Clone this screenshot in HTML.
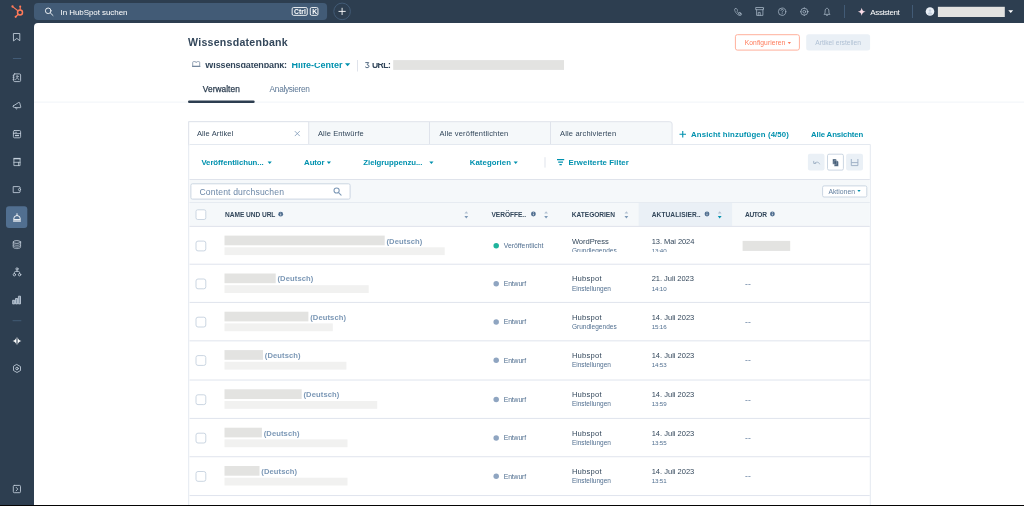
<!DOCTYPE html>
<html lang="de">
<head>
<meta charset="utf-8">
<title>Wissensdatenbank</title>
<style>
*{box-sizing:border-box;margin:0;padding:0}
html,body{width:1024px;height:506px;overflow:hidden;background:#2d3e50}
body{font-family:"Liberation Sans",sans-serif;color:#33475b;position:relative}
.abs{position:absolute}
.t{position:absolute;white-space:pre;line-height:1}
#clip1{left:188px;top:62.6px;width:400px;height:12px;overflow:hidden}
#clip2{left:560px;top:226px;width:150px;height:26px;overflow:hidden}
#clip2 .t,#clip1 .t{position:absolute}
#txt{position:absolute;left:0;top:0;width:1024px;height:506px;will-change:transform}
#bottomline{left:0;top:505px;width:1024px;height:1px;background:#050505}
svg#ic,svg#bx{position:absolute;left:0;top:0;width:1024px;height:506px}
</style>
</head>
<body>
<svg id="bx" viewBox="0 0 1024 506" width="1024" height="506">
<path d="M34 506V27a4 4 0 0 1 4-4H1024V506z" fill="#fff"/>
<rect x="34.00" y="2.90" width="293.10" height="17.00" rx="4" fill="#425b76"/>
<rect x="292.15" y="7.55" width="15.10" height="7.80" rx="1.35" fill="none" stroke="#ffffff" stroke-width="0.9"/>
<rect x="310.25" y="7.55" width="7.70" height="7.80" rx="1.35" fill="none" stroke="#ffffff" stroke-width="0.9"/>
<circle cx="342.1" cy="11.4" r="8.3" fill="none" stroke="#425b76" stroke-width="1"/>
<rect x="844.00" y="5.00" width="1.00" height="13.00" rx="0" fill="#425b76"/>
<rect x="912.00" y="5.00" width="1.00" height="13.00" rx="0" fill="#425b76"/>
<rect x="937.90" y="6.80" width="66.90" height="10.20" rx="0" fill="#e3e3e1"/>
<rect x="12.90" y="58.00" width="8.30" height="1.00" rx="0" fill="#425b76"/>
<rect x="12.60" y="320.20" width="8.70" height="1.00" rx="0" fill="#425b76"/>
<rect x="6.00" y="206.20" width="21.30" height="21.80" rx="3" fill="#516f90"/>
<rect x="735.40" y="34.70" width="64.00" height="15.40" rx="2.0" fill="#fff" stroke="#ffb09c" stroke-width="1"/>
<rect x="806.20" y="34.20" width="63.90" height="16.40" rx="2.5" fill="#eaf0f6"/>
<rect x="357.00" y="60.00" width="1.00" height="11.50" rx="0" fill="#dfe3eb"/>
<rect x="393.20" y="60.10" width="170.80" height="9.80" rx="0" fill="#e3e3e1"/>
<rect x="34.00" y="101.60" width="990.00" height="1.00" rx="0" fill="#f1f4f8"/>
<rect x="188.00" y="100.60" width="66.70" height="2.50" rx="1.25" fill="#2d3e50"/>
<path d="M188.700 144.500V121.700H669.800a2.300 2.300 0 0 1 2.300 2.300V144.500z" fill="#f5f8fa" stroke="#dfe3eb" stroke-width="1"/>
<path d="M188.700 145.500V121.700H308.700V144.500" fill="#fff" stroke="#dfe3eb" stroke-width="1"/>
<rect x="189.50" y="144.00" width="119.00" height="1.00" rx="0" fill="#e4e9f0"/>
<rect x="429.00" y="122.00" width="1.00" height="22.00" rx="0" fill="#dfe3eb"/>
<rect x="550.00" y="122.00" width="1.00" height="22.00" rx="0" fill="#dfe3eb"/>
<path d="M188.700 144.500V507M308.700 144.500H870.300V507" fill="none" stroke="#e4e9f0" stroke-width="1"/>
<rect x="189.50" y="179.00" width="680.30" height="1.00" rx="0" fill="#dfe3eb"/>
<rect x="189.50" y="180.00" width="680.30" height="22.00" rx="0" fill="#f5f8fa"/>
<rect x="189.50" y="202.00" width="680.30" height="24.30" rx="0" fill="#f5f8fa"/>
<rect x="638.60" y="203.00" width="93.50" height="23.30" rx="0" fill="#eaf0f6"/>
<rect x="189.50" y="202.00" width="680.30" height="1.00" rx="0" fill="#e6ebf1"/>
<rect x="189.50" y="225.90" width="680.30" height="1.00" rx="0" fill="#dfe3eb"/>
<rect x="544.50" y="157.20" width="1.00" height="10.40" rx="0" fill="#dfe3eb"/>
<rect x="807.90" y="153.70" width="16.60" height="16.90" rx="2" fill="#eaf0f6"/>
<rect x="827.50" y="154.20" width="15.90" height="15.90" rx="1.5" fill="#fff" stroke="#cbd6e2" stroke-width="1"/>
<rect x="846.10" y="153.70" width="16.90" height="16.90" rx="2" fill="#eaf0f6"/>
<rect x="190.90" y="183.80" width="159.20" height="15.30" rx="1.5" fill="#fff" stroke="#cbd6e2" stroke-width="1"/>
<rect x="822.60" y="185.90" width="44.20" height="11.10" rx="1.5" fill="#fff" stroke="#cbd6e2" stroke-width="1"/>
<rect x="196.00" y="209.80" width="9.80" height="9.70" rx="1.7000000000000002" fill="#fff" stroke="#cbd6e2" stroke-width="1"/>
<rect x="224.50" y="235.60" width="160.20" height="9.70" rx="0" fill="#e3e3e1"/>
<rect x="224.50" y="247.30" width="220.20" height="7.80" rx="0" fill="#f1f1f0"/>
<rect x="196.00" y="241.10" width="9.80" height="9.80" rx="2.0" fill="#fff" stroke="#cbd6e2" stroke-width="1"/>
<circle cx="496.2" cy="245.80" r="2.750" fill="#1fb39c"/>
<rect x="189.50" y="263.70" width="680.30" height="1.05" rx="0" fill="#e1e5ee"/>
<rect x="224.50" y="273.50" width="51.20" height="9.70" rx="0" fill="#e3e3e1"/>
<rect x="224.50" y="285.20" width="144.20" height="7.80" rx="0" fill="#f1f1f0"/>
<rect x="196.00" y="279.00" width="9.80" height="9.80" rx="2.0" fill="#fff" stroke="#cbd6e2" stroke-width="1"/>
<circle cx="496.2" cy="283.70" r="2.750" fill="#8fa5c1"/>
<rect x="189.50" y="301.90" width="680.30" height="1.05" rx="0" fill="#e1e5ee"/>
<rect x="224.50" y="311.70" width="83.90" height="9.70" rx="0" fill="#e3e3e1"/>
<rect x="224.50" y="323.40" width="108.30" height="7.80" rx="0" fill="#f1f1f0"/>
<rect x="196.00" y="317.20" width="9.80" height="9.80" rx="2.0" fill="#fff" stroke="#cbd6e2" stroke-width="1"/>
<circle cx="496.2" cy="321.90" r="2.750" fill="#8fa5c1"/>
<rect x="189.50" y="340.30" width="680.30" height="1.05" rx="0" fill="#e1e5ee"/>
<rect x="224.50" y="350.10" width="38.50" height="9.70" rx="0" fill="#e3e3e1"/>
<rect x="224.50" y="361.80" width="121.90" height="7.80" rx="0" fill="#f1f1f0"/>
<rect x="196.00" y="355.60" width="9.80" height="9.80" rx="2.0" fill="#fff" stroke="#cbd6e2" stroke-width="1"/>
<circle cx="496.2" cy="360.30" r="2.750" fill="#8fa5c1"/>
<rect x="189.50" y="379.50" width="680.30" height="1.05" rx="0" fill="#e1e5ee"/>
<rect x="224.50" y="389.30" width="77.20" height="9.70" rx="0" fill="#e3e3e1"/>
<rect x="224.50" y="401.00" width="152.70" height="7.80" rx="0" fill="#f1f1f0"/>
<rect x="196.00" y="394.80" width="9.80" height="9.80" rx="2.0" fill="#fff" stroke="#cbd6e2" stroke-width="1"/>
<circle cx="496.2" cy="399.50" r="2.750" fill="#8fa5c1"/>
<rect x="189.50" y="417.90" width="680.30" height="1.05" rx="0" fill="#e1e5ee"/>
<rect x="224.50" y="427.70" width="37.40" height="9.70" rx="0" fill="#e3e3e1"/>
<rect x="224.50" y="439.40" width="123.00" height="7.80" rx="0" fill="#f1f1f0"/>
<rect x="196.00" y="433.20" width="9.80" height="9.80" rx="2.0" fill="#fff" stroke="#cbd6e2" stroke-width="1"/>
<circle cx="496.2" cy="437.90" r="2.750" fill="#8fa5c1"/>
<rect x="189.50" y="456.20" width="680.30" height="1.05" rx="0" fill="#e1e5ee"/>
<rect x="224.50" y="466.00" width="35.00" height="9.70" rx="0" fill="#e3e3e1"/>
<rect x="224.50" y="477.70" width="123.00" height="7.80" rx="0" fill="#f1f1f0"/>
<rect x="196.00" y="471.50" width="9.80" height="9.80" rx="2.0" fill="#fff" stroke="#cbd6e2" stroke-width="1"/>
<circle cx="496.2" cy="476.20" r="2.750" fill="#8fa5c1"/>
<rect x="189.50" y="495.00" width="680.30" height="1.05" rx="0" fill="#e1e5ee"/>
<rect x="742.60" y="240.90" width="47.60" height="10.00" rx="0" fill="#e3e3e1"/>
</svg>
<div id="txt">
<div class="t" style="left:60.50px;top:9.00px;font-size:8px;color:#ffffff;letter-spacing:-0.065px;">In HubSpot suchen</div>
<div class="t" style="left:870.30px;top:9.00px;font-size:8px;color:#ffffff;letter-spacing:-0.371px;">Assistent</div>
<div class="t" style="left:294.10px;top:9.00px;font-size:6.8px;color:#ffffff;letter-spacing:-0.006px;font-weight:bold;">Ctrl</div>
<div class="t" style="left:312.20px;top:9.00px;font-size:6.8px;color:#ffffff;letter-spacing:-0.722px;font-weight:bold;">K</div>
<div class="t" style="left:188.10px;top:37.00px;font-size:10.6px;color:#33475b;letter-spacing:0.248px;font-weight:bold;">Wissensdatenbank</div>
<div class="t" style="left:744.80px;top:40.00px;font-size:6.7px;color:#ff7a59;letter-spacing:0.060px;">Konfigurieren</div>
<div class="t" style="left:815.20px;top:40.00px;font-size:6.7px;color:#b0c1d4;letter-spacing:0.005px;">Artikel erstellen</div>
<div class="t" style="left:202.80px;top:85.00px;font-size:8.3px;color:#2d3e50;letter-spacing:0.070px;-webkit-text-stroke:0.25px #2d3e50;">Verwalten</div>
<div class="t" style="left:269.60px;top:85.00px;font-size:8.3px;color:#5c7795;letter-spacing:-0.296px;">Analysieren</div>
<div class="t" style="left:196.90px;top:130.00px;font-size:7.5px;color:#33475b;letter-spacing:0.126px;">Alle Artikel</div>
<div class="t" style="left:318.00px;top:130.00px;font-size:7.5px;color:#33475b;letter-spacing:0.118px;">Alle Entwürfe</div>
<div class="t" style="left:439.40px;top:130.00px;font-size:7.5px;color:#33475b;letter-spacing:0.174px;">Alle veröffentlichten</div>
<div class="t" style="left:560.00px;top:130.00px;font-size:7.5px;color:#33475b;letter-spacing:0.171px;">Alle archivierten</div>
<div class="t" style="left:691.10px;top:131.00px;font-size:7.8px;color:#0091ae;letter-spacing:0.122px;font-weight:bold;">Ansicht hinzufügen (4/50)</div>
<div class="t" style="left:811.10px;top:131.00px;font-size:7.8px;color:#0091ae;letter-spacing:-0.129px;font-weight:bold;">Alle Ansichten</div>
<div class="t" style="left:201.40px;top:159.00px;font-size:7.8px;color:#0091ae;letter-spacing:-0.056px;font-weight:bold;">Veröffentlichun...</div>
<div class="t" style="left:304.10px;top:159.00px;font-size:7.8px;color:#0091ae;letter-spacing:-0.074px;font-weight:bold;">Autor</div>
<div class="t" style="left:363.30px;top:159.00px;font-size:7.8px;color:#0091ae;letter-spacing:-0.045px;font-weight:bold;">Zielgruppenzu...</div>
<div class="t" style="left:469.80px;top:159.00px;font-size:7.8px;color:#0091ae;letter-spacing:0.052px;font-weight:bold;">Kategorien</div>
<div class="t" style="left:568.40px;top:159.00px;font-size:7.8px;color:#0091ae;letter-spacing:0.091px;font-weight:bold;">Erweiterte Filter</div>
<div class="t" style="left:199.40px;top:188.00px;font-size:8.6px;color:#6b87a7;letter-spacing:0.161px;">Content durchsuchen</div>
<div class="t" style="left:828.40px;top:189.00px;font-size:6.8px;color:#6480a0;letter-spacing:0.021px;">Aktionen</div>
<div class="t" style="left:225.00px;top:212.00px;font-size:6.6px;color:#33475b;letter-spacing:-0.047px;font-weight:bold;">NAME UND URL</div>
<div class="t" style="left:491.50px;top:212.00px;font-size:6.6px;color:#33475b;letter-spacing:-0.039px;font-weight:bold;">VERÖFFE..</div>
<div class="t" style="left:571.80px;top:212.00px;font-size:6.6px;color:#33475b;letter-spacing:-0.032px;font-weight:bold;">KATEGORIEN</div>
<div class="t" style="left:651.70px;top:212.00px;font-size:6.6px;color:#33475b;letter-spacing:0.083px;font-weight:bold;">AKTUALISIER..</div>
<div class="t" style="left:745.00px;top:212.00px;font-size:6.6px;color:#33475b;letter-spacing:-0.357px;font-weight:bold;">AUTOR</div>
<div class="t" style="left:386.50px;top:238.00px;font-size:7.6px;color:#7c98b6;letter-spacing:0.096px;font-weight:bold;">(Deutsch)</div>
<div class="t" style="left:503.70px;top:243.00px;font-size:6.8px;color:#516f90;letter-spacing:0.041px;">Veröffentlicht</div>
<div class="t" style="left:571.90px;top:238.00px;font-size:7.6px;color:#33475b;letter-spacing:-0.065px;">WordPress</div>
<div class="t" style="left:651.70px;top:238.00px;font-size:7.5px;color:#33475b;letter-spacing:-0.061px;">13. Mai 2024</div>
<div class="t" style="left:277.50px;top:275.00px;font-size:7.6px;color:#7c98b6;letter-spacing:0.096px;font-weight:bold;">(Deutsch)</div>
<div class="t" style="left:503.70px;top:281.00px;font-size:6.8px;color:#516f90;letter-spacing:-0.091px;">Entwurf</div>
<div class="t" style="left:571.90px;top:275.00px;font-size:7.6px;color:#33475b;letter-spacing:0.234px;">Hubspot</div>
<div class="t" style="left:651.70px;top:275.00px;font-size:7.5px;color:#33475b;letter-spacing:-0.029px;">21. Juli 2023</div>
<div class="t" style="left:571.90px;top:286.00px;font-size:6.5px;color:#516f90;letter-spacing:-0.003px;">Einstellungen</div>
<div class="t" style="left:651.70px;top:286.00px;font-size:6.2px;color:#516f90;letter-spacing:-0.146px;">14:10</div>
<div class="t" style="left:745.00px;top:280.00px;font-size:8.6px;color:#6a84a3;letter-spacing:0.066px;">--</div>
<div class="t" style="left:310.20px;top:314.00px;font-size:7.6px;color:#7c98b6;letter-spacing:0.096px;font-weight:bold;">(Deutsch)</div>
<div class="t" style="left:503.70px;top:319.00px;font-size:6.8px;color:#516f90;letter-spacing:-0.091px;">Entwurf</div>
<div class="t" style="left:571.90px;top:314.00px;font-size:7.6px;color:#33475b;letter-spacing:0.234px;">Hubspot</div>
<div class="t" style="left:651.70px;top:314.00px;font-size:7.5px;color:#33475b;letter-spacing:0.004px;">14. Juli 2023</div>
<div class="t" style="left:571.90px;top:324.00px;font-size:6.5px;color:#516f90;letter-spacing:0.029px;">Grundlegendes</div>
<div class="t" style="left:651.70px;top:324.00px;font-size:6.2px;color:#516f90;letter-spacing:-0.146px;">15:16</div>
<div class="t" style="left:745.00px;top:318.00px;font-size:8.6px;color:#6a84a3;letter-spacing:0.066px;">--</div>
<div class="t" style="left:264.80px;top:352.00px;font-size:7.6px;color:#7c98b6;letter-spacing:0.096px;font-weight:bold;">(Deutsch)</div>
<div class="t" style="left:503.70px;top:358.00px;font-size:6.8px;color:#516f90;letter-spacing:-0.091px;">Entwurf</div>
<div class="t" style="left:571.90px;top:352.00px;font-size:7.6px;color:#33475b;letter-spacing:0.234px;">Hubspot</div>
<div class="t" style="left:651.70px;top:352.00px;font-size:7.5px;color:#33475b;letter-spacing:0.004px;">14. Juli 2023</div>
<div class="t" style="left:571.90px;top:362.00px;font-size:6.5px;color:#516f90;letter-spacing:-0.003px;">Einstellungen</div>
<div class="t" style="left:651.70px;top:362.00px;font-size:6.2px;color:#516f90;letter-spacing:-0.146px;">14:53</div>
<div class="t" style="left:745.00px;top:356.00px;font-size:8.6px;color:#6a84a3;letter-spacing:0.066px;">--</div>
<div class="t" style="left:303.50px;top:391.00px;font-size:7.6px;color:#7c98b6;letter-spacing:0.096px;font-weight:bold;">(Deutsch)</div>
<div class="t" style="left:503.70px;top:397.00px;font-size:6.8px;color:#516f90;letter-spacing:-0.091px;">Entwurf</div>
<div class="t" style="left:571.90px;top:391.00px;font-size:7.6px;color:#33475b;letter-spacing:0.234px;">Hubspot</div>
<div class="t" style="left:651.70px;top:391.00px;font-size:7.5px;color:#33475b;letter-spacing:0.004px;">14. Juli 2023</div>
<div class="t" style="left:571.90px;top:401.00px;font-size:6.5px;color:#516f90;letter-spacing:-0.003px;">Einstellungen</div>
<div class="t" style="left:651.70px;top:401.00px;font-size:6.2px;color:#516f90;letter-spacing:-0.146px;">13:59</div>
<div class="t" style="left:745.00px;top:396.00px;font-size:8.6px;color:#6a84a3;letter-spacing:0.066px;">--</div>
<div class="t" style="left:263.70px;top:430.00px;font-size:7.6px;color:#7c98b6;letter-spacing:0.096px;font-weight:bold;">(Deutsch)</div>
<div class="t" style="left:503.70px;top:435.00px;font-size:6.8px;color:#516f90;letter-spacing:-0.091px;">Entwurf</div>
<div class="t" style="left:571.90px;top:430.00px;font-size:7.6px;color:#33475b;letter-spacing:0.234px;">Hubspot</div>
<div class="t" style="left:651.70px;top:430.00px;font-size:7.5px;color:#33475b;letter-spacing:0.004px;">14. Juli 2023</div>
<div class="t" style="left:571.90px;top:440.00px;font-size:6.5px;color:#516f90;letter-spacing:-0.003px;">Einstellungen</div>
<div class="t" style="left:651.70px;top:440.00px;font-size:6.2px;color:#516f90;letter-spacing:-0.146px;">13:55</div>
<div class="t" style="left:745.00px;top:434.00px;font-size:8.6px;color:#6a84a3;letter-spacing:0.066px;">--</div>
<div class="t" style="left:261.30px;top:468.00px;font-size:7.6px;color:#7c98b6;letter-spacing:0.096px;font-weight:bold;">(Deutsch)</div>
<div class="t" style="left:503.70px;top:474.00px;font-size:6.8px;color:#516f90;letter-spacing:-0.091px;">Entwurf</div>
<div class="t" style="left:571.90px;top:468.00px;font-size:7.6px;color:#33475b;letter-spacing:0.234px;">Hubspot</div>
<div class="t" style="left:651.70px;top:468.00px;font-size:7.5px;color:#33475b;letter-spacing:0.004px;">14. Juli 2023</div>
<div class="t" style="left:571.90px;top:478.00px;font-size:6.5px;color:#516f90;letter-spacing:-0.003px;">Einstellungen</div>
<div class="t" style="left:651.70px;top:478.00px;font-size:6.2px;color:#516f90;letter-spacing:-0.146px;">13:51</div>
<div class="t" style="left:745.00px;top:472.00px;font-size:8.6px;color:#6a84a3;letter-spacing:0.066px;">--</div>
<div id="clip2" class="abs"><div class="t" style="left:11.90px;top:22.00px;font-size:6.5px;color:#516f90;letter-spacing:0.029px;">Grundlegendes</div><div class="t" style="left:91.70px;top:22.00px;font-size:6.2px;color:#516f90;letter-spacing:-0.146px;">13:40</div></div>
<div id="clip1" class="abs"><div class="t" style="left:17.10px;top:-1.60px;font-size:9px;color:#33475b;letter-spacing:-0.153px;font-weight:bold;">Wissensdatenbank:</div><div class="t" style="left:103.60px;top:-1.60px;font-size:9px;color:#0091ae;letter-spacing:-0.001px;font-weight:bold;">Hilfe-Center</div><div class="t" style="left:183.90px;top:-1.60px;font-size:8.6px;color:#33475b;letter-spacing:-0.510px;font-weight:bold;">URL:</div></div>
</div>
<svg id="ic" viewBox="0 0 1024 506" width="1024" height="506" fill="none" stroke-linecap="round" stroke-linejoin="round">
<!-- hubspot sprocket -->
<g stroke="#ff7a59" fill="none">
<circle cx="20" cy="12.5" r="2.5" stroke-width="1.5"/>
<path d="M20.2 9.4V7.2M17.9 10.8L12.9 6.9M18 14.5L16 16.5" stroke-width="1.1"/>
<g fill="#ff7a59" stroke="none"><circle cx="20.2" cy="6.6" r="1.05"/><circle cx="12.5" cy="6.5" r="1.15"/><circle cx="15.7" cy="16.8" r="1.1"/></g>
</g>
<!-- topbar search -->
<g stroke="#eef2f6" stroke-width="0.95"><circle cx="48.2" cy="10.8" r="2.8"/><path d="M50.4 13L53 15.5"/></g>
<!-- plus -->
<path d="M338.9 11.4h6.4M342.1 8.2v6.4" stroke="#fff" stroke-width="0.9"/>
<!-- right topbar icons -->
<g stroke="#a6b5c5" stroke-width="0.78">
<!-- phone -->
<g transform="translate(738.2 11.9) scale(0.88) translate(-738.6 -12.2)"><path d="M735 8.7c.6-.7 1.5-.7 2 0l.7 1.2c.3.6.1 1.1-.5 1.4.5 1.5 1.2 2.2 2.3 2.6.4-.7 1-.8 1.5-.4l1 .8c.6.6.5 1.300-.2 1.700-1.300.700-2.800.1-4.300-1.200-1.500-1.400-2.600-3-2.900-4.600-.1-.6 0-1.100.4-1.500z"/>
<circle cx="740.300" cy="14.1" r="1.3"/></g>
<!-- marketplace -->
<path d="M756.1 7.5h7.3v2.200h-7.300zM756.600 9.700v5.700h6.300v-5.700M758.200 15.400v-3h2v3M763.400 8.600l.4-.4"/>
<!-- help -->
<circle cx="782.1" cy="11.7" r="3.700"/>
<path d="M781 10.500c0-.8.500-1.200 1.200-1.200.7 0 1.200.4 1.200 1 0 .9-1.200.9-1.200 1.900M782.200 13.600v.1" stroke-width="0.75"/>
<!-- settings -->
<circle cx="804.300" cy="11.700" r="3.500"/><circle cx="804.300" cy="11.700" r="1.400"/>
<path d="M804.300 7.800v.7M804.300 14.900v.7M800.400 11.700h.7M807.500 11.700h.7"/>
<!-- bell -->
<path d="M824.300 14.100c.8-.7.800-1.400.800-3.100 0-1.600.8-2.700 1.900-2.700s1.900 1.100 1.900 2.700c0 1.700 0 2.400.8 3.100zM826.300 15.200c.2.400.5.500.700.500s.5-.1.700-.5"/>
</g>
<!-- assistant sparkle -->
<path d="M861.700 7.700c.5 2.500 1.100 3.400 3.900 4-2.800.6-3.400 1.500-3.900 4-.5-2.500-1.100-3.400-3.900-4 2.800-.6 3.400-1.500 3.900-4z" fill="#fbdde8"/>
<!-- avatar -->
<circle cx="930" cy="11.500" r="4.300" fill="#e9eff6"/>
<circle cx="930" cy="10.500" r="1.200" fill="#c3d0de"/><path d="M927.600 14.600c.2-1.700 1.100-2.400 2.400-2.400s2.200.7 2.400 2.400z" fill="#c3d0de"/>
<path d="M1008.300 10.300h4.900l-2.450 2.800z" fill="#fff"/>
<!-- sidebar icons -->
<g stroke="#c3cfdb" stroke-width="0.85">
<path d="M13.800 33.500h6v7.200l-3-2.300-3 2.300z"/>
<!-- crm -->
<rect x="13.600" y="73.900" width="7" height="7.700" rx="1.100"/>
<circle cx="17.200" cy="76.500" r="0.900" stroke-width="0.7"/><path d="M15.600 79.700c.2-1.100.8-1.500 1.600-1.500s1.400.4 1.600 1.500M13 75.800h1.100M13 77.700h1.100M13 79.600h1.100" stroke-width="0.7"/>
<!-- megaphone -->
<path d="M13.300 105.900l5.500-3.500c.4-.2.800 0 .9.400l1.100 4.200c.1.400-.2.700-.600.700l-5.800-.2c-.7 0-1.200-.4-1.300-1-.1-.3 0-.5.200-.6zM15.600 107.600l.5 1.200c.2.300.600.300.900.100"/>
<!-- content -->
<rect x="13.400" y="130.500" width="7.200" height="7.300" rx="1.100"/>
<path d="M14.900 132.300h1.800M13.400 133.500h7.200" stroke-width="0.7"/><path d="M15 135.500h4" stroke-width="1.300" stroke-linecap="butt"/>
<!-- sales -->
<path d="M13.400 158.600h7.200" stroke-width="1.400" stroke-linecap="butt"/><path d="M13.900 159.300v6.300h6.200v-6.300M13.900 162.300h6.200M18.600 162.300v3.300" stroke-width="0.8"/>
<!-- commerce -->
<path d="M20.200 188.400v-.5q0-1.300-1.300-1.300h-5.700v6h5.700q1.300 0 1.300-1.300v-.6"/><circle cx="19.500" cy="189.600" r="1.100" stroke-width="0.750"/>
<!-- database -->
<ellipse cx="16.900" cy="242" rx="3.700" ry="1.400"/>
<path d="M13.200 242v5.200c0 .8 1.700 1.400 3.700 1.400s3.700-.6 3.700-1.400v-5.200M13.200 243.900c0 .8 1.700 1.400 3.700 1.400s3.700-.6 3.700-1.400M13.200 245.700c0 .8 1.700 1.400 3.700 1.400s3.700-.6 3.700-1.400" stroke-width="0.7"/>
<!-- automation -->
<circle cx="17" cy="268.900" r="1.100"/><circle cx="14.400" cy="274.700" r="1.200"/><circle cx="19.600" cy="274.700" r="1.200"/>
<path d="M17 270v1.400M14.400 273.500v-.9c0-.7.500-1.200 1.200-1.200h2.800c.7 0 1.200.5 1.200 1.200v.9"/>
<!-- reports -->
<path d="M13 300.300h1.700v3.600h-1.700zM15.900 298.500h1.700v5.400h-1.700zM18.800 296.200h1.700v7.700h-1.700z" fill="#8395a8"/>
<!-- hex settings -->
<path d="M17 364.600l3.500 2v3.900l-3.500 2-3.500-2v-3.900z"/><circle cx="17" cy="368.500" r="1.300"/>
<!-- expand -->
<rect x="13.300" y="485.400" width="7.200" height="7.300" rx="1"/><path d="M16.200 487.400l1.600 1.700-1.600 1.700"/>
</g>
<!-- service active (white) -->
<g stroke="#fff" stroke-width="0.9"><path d="M13.600 219.100a3.400 3.600 0 0 1 6.800 0zM17 215.400v-1.700"/><path d="M13.100 221h7.800" stroke-width="1.200" stroke-linecap="butt"/></g>
<!-- sparkle (breeze) -->
<path d="M16.450 336.700V345.300Q16.100 341.800 12.500 341Q16.100 340.200 16.450 336.700zM17.550 336.700Q17.900 340.200 21.500 341Q17.900 341.800 17.550 345.300z" fill="#fff"/>
<!-- tab close -->
<path d="M295.100 131.400l4.400 4.400M299.500 131.400l-4.400 4.400" stroke="#7c98b6" stroke-width="0.8"/>
<!-- add view plus -->
<path d="M679.500 134.200h6.500M682.750 130.950v6.500" stroke="#0091ae" stroke-width="1.1" stroke-linecap="butt"/>
<!-- teal carets -->
<g fill="#0091ae">
<path d="M267.600 161.400h4.200l-2.100 2.500zM326.800 161.400h4.200l-2.100 2.500zM429.300 161.400h4.200l-2.100 2.500zM513.600 161.400h4.200l-2.100 2.500z"/>
<path d="M857.400 190h3.200l-1.600 1.900z"/>
</g>
<path d="M787.700 41.900h3.300l-1.650 2z" fill="#ff7a59"/>
<!-- filter icon -->
<path d="M557 159.600h7.200M558.200 162.100h4.800M559.400 164.600h2.400" stroke="#0091ae" stroke-width="1.1" stroke-linecap="butt"/>
<!-- undo -->
<path d="M819.600 163.900c-.7-2-3.100-2.400-4.900-.8M813.700 161.300v2.100h2.100" stroke="#99acc2" stroke-width="0.85"/>
<!-- copy -->
<path d="M832.700 159.100h3l1 1v4.200h-4zM834.300 160.700h3l1.100 1.100v4.400h-4.100z" fill="#425b76" stroke="#fff" stroke-width="0.3"/>
<!-- save -->
<path d="M851.300 159v6.600h6.600V159M851.300 162.600h6.600" stroke="#99acc2" stroke-width="0.9" stroke-linecap="butt"/>
<!-- content search -->
<g stroke="#7c98b6" stroke-width="1.05"><circle cx="336.600" cy="190.500" r="2.600"/><path d="M338.600 192.600l2.500 2.500"/></g>
<!-- info icons -->
<g fill="#516f90"><circle cx="280.700" cy="214.200" r="2.400"/><circle cx="533.400" cy="214" r="2.400"/><circle cx="707" cy="214" r="2.400"/><circle cx="772.400" cy="214" r="2.400"/></g>
<path d="M280.700 213.800v1.700M533.400 213.600v1.700M707 213.600v1.700M772.400 213.600v1.700" stroke="#fff" stroke-width="0.7" stroke-linecap="butt"/>
<g fill="#fff"><circle cx="280.700" cy="212.900" r=".4"/><circle cx="533.400" cy="212.700" r=".4"/><circle cx="707" cy="212.700" r=".4"/><circle cx="772.400" cy="212.700" r=".4"/></g>
<!-- sort arrows -->
<g fill="#b2c1d2"><path d="M464.400 213.600h3.800l-1.900-2.400zM544.200 213.600h3.800l-1.900-2.400zM624.500 213.600h3.800l-1.900-2.400zM717.800 213.600h3.800l-1.900-2.400z"/></g>
<g fill="#7c98b6"><path d="M464.400 216h3.800l-1.900 2.400zM544.200 216h3.800l-1.900 2.400zM624.500 216h3.800l-1.900 2.400z"/></g>
<path d="M717.800 216h3.800l-1.900 2.400z" fill="#0091ae"/>
<!-- header line 2 icons -->
<g stroke-linejoin="round" stroke-linecap="round">
<path d="M192.700 66.100V62.500q0-.9.900-.9h1.300q1.200 0 1.300 1 .1-1 1.300-1h1.300q.900 0 .900.900V66.100z" stroke="#7a8ca2" stroke-width="0.8"/>
<path d="M192.500 66.200h7.400" stroke="#6b7f97" stroke-width="1.100"/>
<path d="M345 63.300h5.200l-2.600 3z" fill="#0091ae"/>
<path d="M365.700 62.600h3l-1.600 2.100q1.900.1 1.900 1.500 0 1.500-2 1.500-1.100 0-1.600-.7" stroke="#425b76" stroke-width="0.9"/>
</g>
</svg>
<div id="bottomline" class="abs"></div>
</body>
</html>
